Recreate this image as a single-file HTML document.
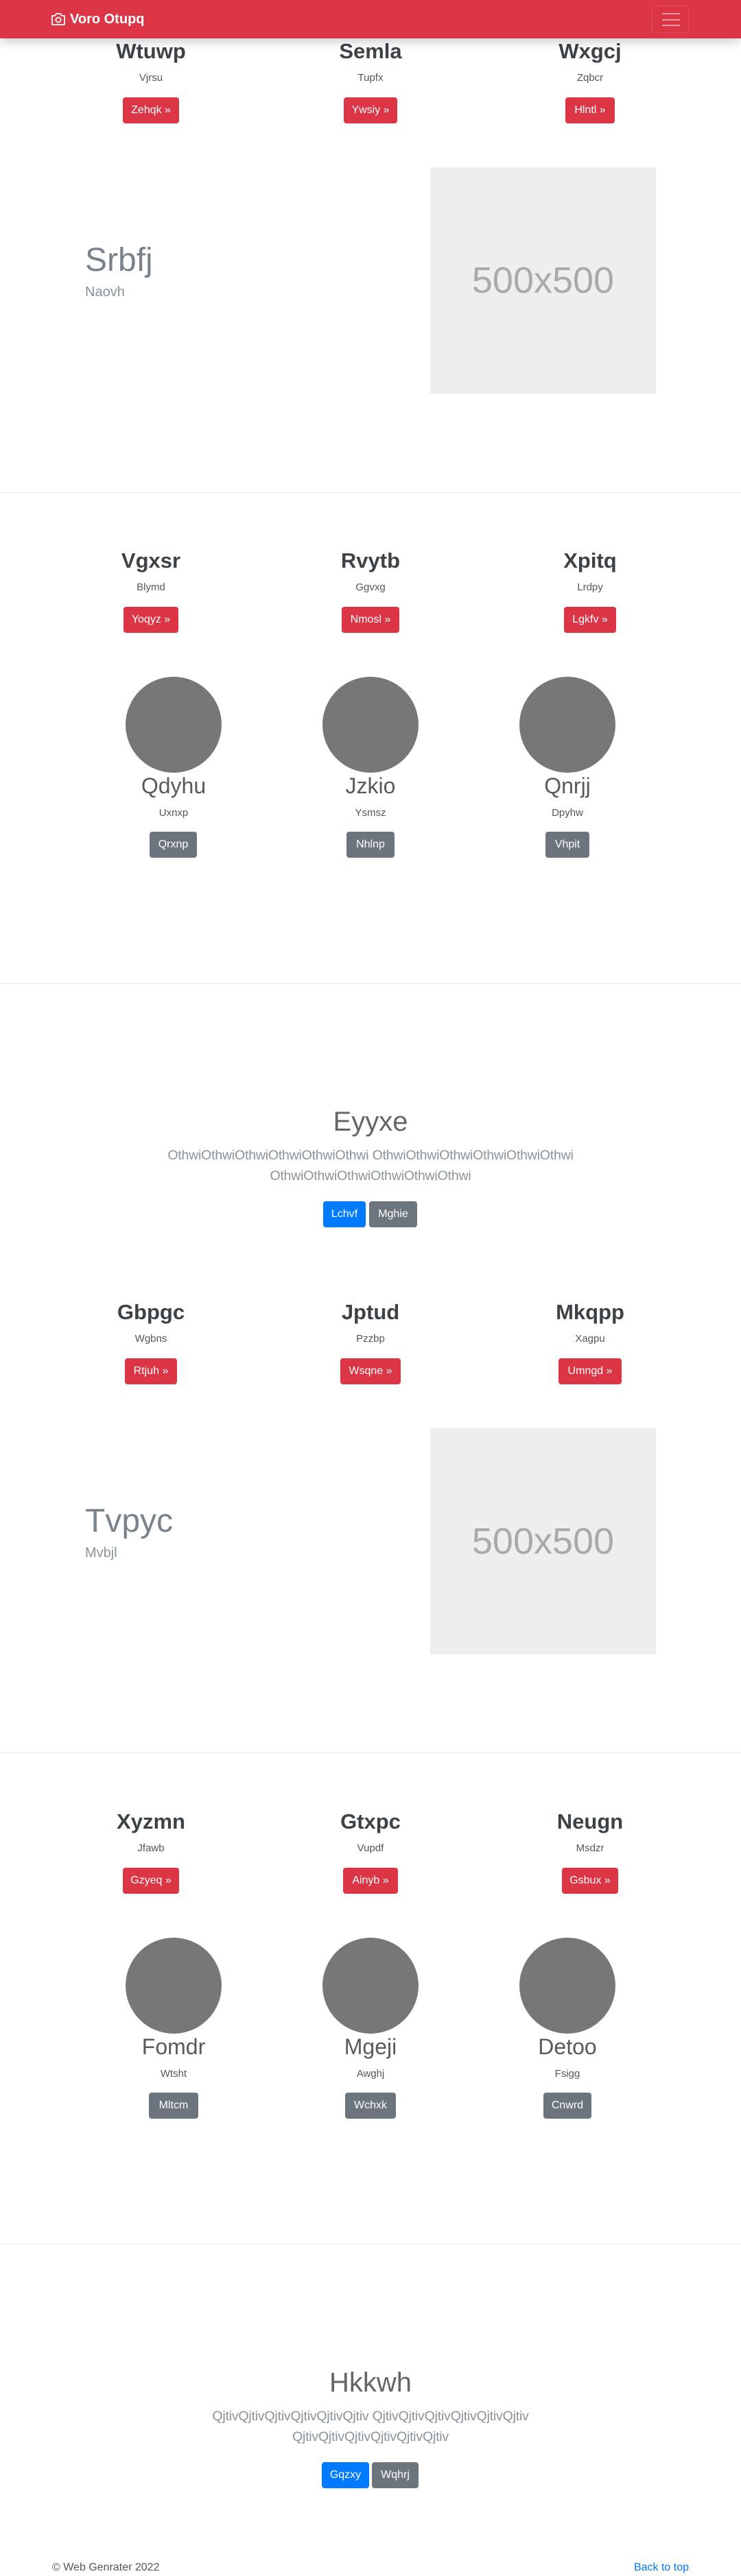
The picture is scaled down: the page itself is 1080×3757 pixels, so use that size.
<!DOCTYPE html>
<html><head><meta charset="utf-8">
<style>
*{margin:0;padding:0;box-sizing:border-box}
html,body{width:1080px;height:3757px;overflow:hidden;background:#fff;font-family:"Liberation Sans",sans-serif;color:#212529}
.a{position:absolute}
.c{position:absolute;width:400px;text-align:center;line-height:1.2;white-space:nowrap}
.h{font-size:31px;font-weight:bold;color:#3d4246}
.s{font-size:15px;color:#555}
.btn{position:absolute;height:38px;line-height:38px;font-size:16px;color:#fff;border-radius:4px;text-align:center;white-space:nowrap}
.r{background:#dc3545}.g{background:#6c757d}.b{background:#007bff}
.circ{position:absolute;width:140px;height:140px;border-radius:50%;background:#777}
.n{font-size:32px;color:#5a5a5a}
.big{font-size:48px;font-weight:300;color:#7a838a;line-height:1.2}
.ph{position:absolute;background:#eee;color:#aaa;font-size:54px;display:flex;align-items:center;justify-content:center}
.hr{position:absolute;left:0;width:1080px;height:1px;background:#eaeaea}
.t{font-size:40px;font-weight:300;color:#666}
.p{position:absolute;left:140px;width:800px;text-align:center;font-size:19.5px;font-weight:300;color:#8a939a;line-height:30px;letter-spacing:-0.2px}
</style></head><body>

<div class="a" style="left:0;top:0;width:1080px;height:56px;background:#dc3545;box-shadow:0 4px 14px rgba(0,0,0,.22);z-index:5">
  <svg class="a" style="left:74px;top:19px" width="22" height="18" viewBox="0 0 22 18"><path d="M2 4h4l2-3h6l2 3h4v13H2z" fill="none" stroke="#fff" stroke-width="1.8" stroke-linejoin="round"/><circle cx="11" cy="10" r="3.6" fill="none" stroke="#fff" stroke-width="1.8"/></svg>
  <div class="a" style="left:102px;top:16px;font-size:20px;font-weight:bold;color:#fff;line-height:24px">Voro Otupq</div>
  <div class="a" style="left:950px;top:8px;width:54px;height:40px;border:1px solid rgba(255,255,255,.12);border-radius:4px">
    <div class="a" style="left:14px;top:10px;width:26px;height:2px;background:rgba(255,255,255,.5)"></div>
    <div class="a" style="left:14px;top:19px;width:26px;height:2px;background:rgba(255,255,255,.5)"></div>
    <div class="a" style="left:14px;top:27px;width:26px;height:2px;background:rgba(255,255,255,.5)"></div>
  </div>
</div>

<div class="c h" style="left:20px;top:56px">Wtuwp</div>
<div class="c h" style="left:340px;top:56px">Semla</div>
<div class="c h" style="left:660px;top:56px">Wxgcj</div>
<div class="c s" style="left:20px;top:105px">Vjrsu</div>
<div class="c s" style="left:340px;top:105px">Tupfx</div>
<div class="c s" style="left:660px;top:105px">Zqbcr</div>
<div class="btn r" style="left:179px;top:142px;width:82px">Zehqk »</div>
<div class="btn r" style="left:501px;top:142px;width:78px">Ywsiy »</div>
<div class="btn r" style="left:824px;top:142px;width:72px">Hlntl »</div>

<div class="a big" style="left:124px;top:351px">Srbfj</div>
<div class="a" style="left:124px;top:415px;font-size:20px;font-weight:300;color:#8a939a">Naovh</div>
<div class="ph" style="left:627px;top:244px;width:329px;height:330px">500x500</div>

<div class="hr" style="top:718px"></div>

<div class="c h" style="left:20px;top:799px">Vgxsr</div>
<div class="c h" style="left:340px;top:799px">Rvytb</div>
<div class="c h" style="left:660px;top:799px">Xpitq</div>
<div class="c s" style="left:20px;top:848px">Blymd</div>
<div class="c s" style="left:340px;top:848px">Ggvxg</div>
<div class="c s" style="left:660px;top:848px">Lrdpy</div>
<div class="btn r" style="left:180px;top:885px;width:80px">Yoqyz »</div>
<div class="btn r" style="left:498px;top:885px;width:84px">Nmosl »</div>
<div class="btn r" style="left:822px;top:885px;width:76px">Lgkfv »</div>

<div class="circ" style="left:183px;top:987px"></div>
<div class="circ" style="left:470px;top:987px"></div>
<div class="circ" style="left:757px;top:987px"></div>
<div class="c n" style="left:53px;top:1127px">Qdyhu</div>
<div class="c n" style="left:340px;top:1127px">Jzkio</div>
<div class="c n" style="left:627px;top:1127px">Qnrjj</div>
<div class="c s" style="left:53px;top:1177px">Uxnxp</div>
<div class="c s" style="left:340px;top:1177px">Ysmsz</div>
<div class="c s" style="left:627px;top:1177px">Dpyhw</div>
<div class="btn g" style="left:218px;top:1213px;width:69px">Qrxnp</div>
<div class="btn g" style="left:505px;top:1213px;width:70px">Nhlnp</div>
<div class="btn g" style="left:795px;top:1213px;width:64px">Vhpit</div>

<div class="hr" style="top:1434px"></div>

<div class="c t" style="left:340px;top:1612px">Eyyxe</div>
<div class="p" style="top:1670px">OthwiOthwiOthwiOthwiOthwiOthwi OthwiOthwiOthwiOthwiOthwiOthwi<br>OthwiOthwiOthwiOthwiOthwiOthwi</div>
<div class="btn b" style="left:471px;top:1752px;width:62px">Lchvf</div>
<div class="btn g" style="left:538px;top:1752px;width:70px">Mghie</div>

<div class="c h" style="left:20px;top:1895px">Gbpgc</div>
<div class="c h" style="left:340px;top:1895px">Jptud</div>
<div class="c h" style="left:660px;top:1895px">Mkqpp</div>
<div class="c s" style="left:20px;top:1944px">Wgbns</div>
<div class="c s" style="left:340px;top:1944px">Pzzbp</div>
<div class="c s" style="left:660px;top:1944px">Xagpu</div>
<div class="btn r" style="left:182px;top:1981px;width:76px">Rtjuh »</div>
<div class="btn r" style="left:496px;top:1981px;width:88px">Wsqne »</div>
<div class="btn r" style="left:814px;top:1981px;width:92px">Umngd »</div>

<div class="a big" style="left:124px;top:2190px">Tvpyc</div>
<div class="a" style="left:124px;top:2254px;font-size:20px;font-weight:300;color:#8a939a">Mvbjl</div>
<div class="ph" style="left:627px;top:2083px;width:329px;height:330px">500x500</div>

<div class="hr" style="top:2556px"></div>

<div class="c h" style="left:20px;top:2638px">Xyzmn</div>
<div class="c h" style="left:340px;top:2638px">Gtxpc</div>
<div class="c h" style="left:660px;top:2638px">Neugn</div>
<div class="c s" style="left:20px;top:2687px">Jfawb</div>
<div class="c s" style="left:340px;top:2687px">Vupdf</div>
<div class="c s" style="left:660px;top:2687px">Msdzr</div>
<div class="btn r" style="left:179px;top:2724px;width:82px">Gzyeq »</div>
<div class="btn r" style="left:500px;top:2724px;width:80px">Ainyb »</div>
<div class="btn r" style="left:819px;top:2724px;width:82px">Gsbux »</div>

<div class="circ" style="left:183px;top:2826px"></div>
<div class="circ" style="left:470px;top:2826px"></div>
<div class="circ" style="left:757px;top:2826px"></div>
<div class="c n" style="left:53px;top:2966px">Fomdr</div>
<div class="c n" style="left:340px;top:2966px">Mgeji</div>
<div class="c n" style="left:627px;top:2966px">Detoo</div>
<div class="c s" style="left:53px;top:3016px">Wtsht</div>
<div class="c s" style="left:340px;top:3016px">Awghj</div>
<div class="c s" style="left:627px;top:3016px">Fsigg</div>
<div class="btn g" style="left:217px;top:3052px;width:72px">Mltcm</div>
<div class="btn g" style="left:503px;top:3052px;width:74px">Wchxk</div>
<div class="btn g" style="left:792px;top:3052px;width:70px">Cnwrd</div>

<div class="hr" style="top:3272px"></div>

<div class="c t" style="left:340px;top:3451px">Hkkwh</div>
<div class="p" style="top:3509px">QjtivQjtivQjtivQjtivQjtivQjtiv QjtivQjtivQjtivQjtivQjtivQjtiv<br>QjtivQjtivQjtivQjtivQjtivQjtiv</div>
<div class="btn b" style="left:469px;top:3591px;width:69px">Gqzxy</div>
<div class="btn g" style="left:542px;top:3591px;width:68px">Wqhrj</div>

<div class="a" style="left:76px;top:3735px;font-size:16px;color:#555;line-height:20px">© Web Genrater 2022</div>
<div class="a" style="right:76px;top:3735px;font-size:16px;color:#007bff;line-height:20px">Back to top</div>
</body></html>
